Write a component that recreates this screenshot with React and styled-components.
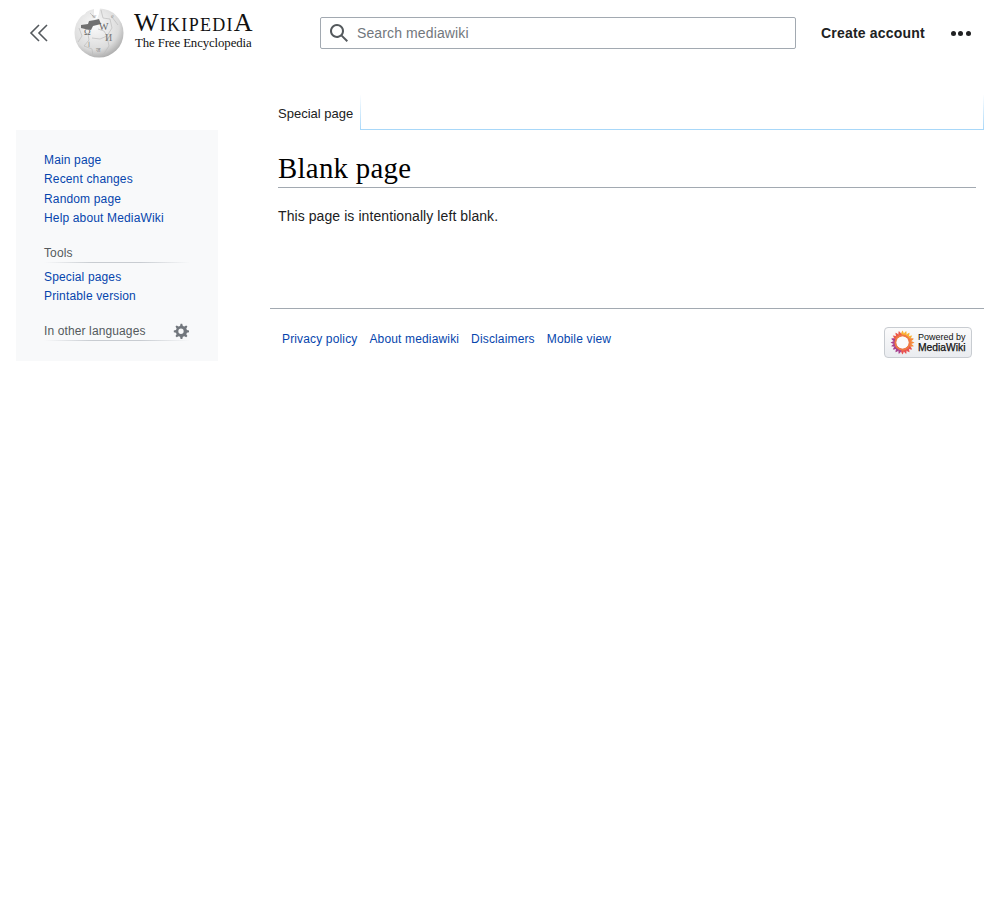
import React from "react";
import styled, { createGlobalStyle } from "styled-components";

const GlobalStyle = createGlobalStyle`
  html, body { margin: 0; padding: 0; background: #fff; }
  body {
    font-family: "Liberation Sans", Arial, sans-serif;
    color: #202122;
  }
`;

const Page = styled.div`
  width: 1000px;
  min-height: 900px;
  box-sizing: border-box;
`;

const Header = styled.header`
  height: 66px;
  display: flex;
  align-items: center;
  padding-left: 28px;
`;

const Collapse = styled.button`
  width: 22px;
  height: 22px;
  padding: 0;
  border: 0;
  background: none;
  display: flex;
  align-items: center;
  justify-content: center;
  margin-right: 24px;
`;

const Logo = styled.a`
  width: 246px;
  display: flex;
  align-items: center;
  gap: 10px;
  color: #000;
  text-decoration: none;
`;

const Wordmark = styled.div`
  display: flex;
  flex-direction: column;
  margin-top: -6px;
  font-family: "Liberation Serif", "Times New Roman", serif;
  color: #111;
`;

const WordmarkTitle = styled.span`
  font-size: 26px;
  line-height: 25px;
  font-variant: small-caps;
  letter-spacing: 1.28px;
  white-space: nowrap;
`;

const WordmarkSub = styled.span`
  font-size: 12.8px;
  line-height: 14px;
  margin-top: 1px;
  padding-left: 1px;
  letter-spacing: -0.1px;
  white-space: nowrap;
`;

const SearchBox = styled.div`
  width: 476px;
  height: 32px;
  box-sizing: border-box;
  border: 1px solid #a2a9b1;
  border-radius: 2px;
  display: flex;
  align-items: center;
  gap: 8px;
  padding-left: 8px;
  font-size: 14px;
  letter-spacing: 0.12px;
  color: #72777d;
`;

const CreateAccount = styled.a`
  margin-left: 25px;
  font-size: 14px;
  font-weight: 700;
  letter-spacing: 0.2px;
  color: #202122;
  white-space: nowrap;
`;

const More = styled.div`
  margin-left: 26px;
  display: flex;
  gap: 2.500px;
`;

const Dot = styled.span`
  width: 5px;
  height: 5px;
  border-radius: 50%;
  background: #202122;
`;

const Body = styled.div`
  display: grid;
  grid-template-columns: 202px 714px;
  column-gap: 52px;
  padding: 29px 16px 0;
  align-items: start;
`;

const Sidebar = styled.nav`
  margin-top: 35px;
  background: #f8f9fa;
  padding: 21px 28px 20px;
  height: 231px;
  box-sizing: border-box;
`;

const LinkList = styled.ul`
  list-style: none;
  margin: 0;
  padding: 0;
`;

const SideLink = styled.li`
  font-size: 12px;
  line-height: 19.3px;
  letter-spacing: 0.15px;
  color: #0645ad;
  white-space: nowrap;
`;

const SectionHead = styled.div`
  height: 18px;
  margin: ${({ $top }) => $top}px 0 5px;
  width: 146px;
  display: flex;
  justify-content: space-between;
  align-items: flex-start;
  font-size: 12px;
  line-height: 16px;
  letter-spacing: 0.12px;
  color: #54595d;
  background: linear-gradient(to right, rgba(200,204,209,0) 0, #c8ccd1 33%, #c8ccd1 66%, rgba(200,204,209,0) 100%) bottom / 100% 1px no-repeat;
`;

const Gear = styled.svg`
  width: 16px;
  height: 16px;
  margin-right: 1px;
`;

const Main = styled.main``;

const Tabs = styled.div`
  height: 36px;
  display: flex;
  box-sizing: border-box;
  padding-left: 8px;
`;

const Tab = styled.div`
  width: 82px;
  box-sizing: border-box;
  padding-top: 11px;
  font-size: 13px;
  line-height: 16px;
  color: #202122;
  white-space: nowrap;
`;

const TabFill = styled.div`
  flex: 1;
  height: 35px;
  box-sizing: border-box;
  border-left: 1px solid;
  border-right: 1px solid;
  border-bottom: 1px solid;
  border-image: linear-gradient(to bottom, #fff 0, #a7d7f9 100%) 1;
`;

const Article = styled.div`
  padding: 0 8px;
`;

const Heading = styled.h1`
  margin: 19px 0 0;
  font-family: "Liberation Serif", "Times New Roman", serif;
  font-size: 28.8px;
  font-weight: 400;
  line-height: 37px;
  letter-spacing: 0.3px;
  color: #000;
  border-bottom: 1px solid #a2a9b1;
`;

const Text = styled.p`
  margin: 20px 0 0;
  font-size: 14px;
  line-height: 16px;
  letter-spacing: 0.08px;
  color: #202122;
`;

const Footer = styled.footer`
  margin-top: 84px;
  border-top: 1px solid #a2a9b1;
  padding: 18px 12px 0;
  display: flex;
  justify-content: space-between;
  align-items: flex-start;
`;

const FooterLinks = styled.div`
  display: flex;
  gap: 12px;
  padding-top: 5px;
  font-size: 12px;
  line-height: 14px;
  letter-spacing: 0.15px;
  color: #0645ad;
`;

const Badge = styled.div`
  width: 88px;
  height: 31px;
  box-sizing: border-box;
  border: 1px solid #c8ccd1;
  border-radius: 4px;
  background: linear-gradient(#fbfbfb, #eaecf0);
  display: flex;
  align-items: center;
  gap: 3px;
  padding-left: 5px;
`;

const BadgeText = styled.div`
  display: flex;
  flex-direction: column;
  color: #111;
  font-size: 9px;
  line-height: 10px;
  white-space: nowrap;
`;

const BadgeStrong = styled.span`
  font-size: 10.3px;
  line-height: 11px;
  -webkit-text-stroke: 0.25px #111;
`;

const GlobeLetter = styled.text`
  font-family: "Liberation Serif", serif;
  font-size: ${({ $size }) => $size}px;
  fill: ${({ $fill }) => $fill};
`;

const petals = Array.from({ length: 20 }, (_, i) => i * 18);
const petalColor = (a) => {
  if (a < 60) return "#f9b233";
  if (a < 120) return "#f58a3c";
  if (a < 190) return "#e8504f";
  if (a < 290) return "#a8408f";
  return "#ec5a4b";
};

const Globe = () => (
  <svg width="50" height="50" viewBox="0 0 50 50">
    <defs>
      <radialGradient id="g" cx="0.42" cy="0.35" r="0.75">
        <stop offset="0" stopColor="#fbfbfb" />
        <stop offset="0.65" stopColor="#dcdcdc" />
        <stop offset="1" stopColor="#989898" />
      </radialGradient>
    </defs>
    <circle cx="25" cy="25" r="24.500" fill="url(#g)" />
    <path d="M20 0h6l-1 6-2 5-3-1zM6 3 14 1l-3 5-6 3z" fill="#fff" />
    <path d="M7 17l7-1 1-3 6-1 4-1 2 5-8 2-2 4-6-1-4-1z" fill="#707070" />
    <path d="M16 5l5 5M27 2l2 8 7 1 2 9-5 8 2 10-6 9M14 26l1 6-5 6 8 3 1 7M24 21l6 2 3 5-7 3-8-1M38 9l6 8M5 20l3 8-4 6" fill="none" stroke="#bbb" strokeWidth="0.700" />
    <GlobeLetter x="10" y="27" $size={9} $fill="#666">Ω</GlobeLetter>
    <GlobeLetter x="25" y="22" $size={10} $fill="#666">W</GlobeLetter>
    <GlobeLetter x="31" y="33" $size={10} $fill="#777">И</GlobeLetter>
    <GlobeLetter x="14" y="39" $size={7} $fill="#888">ا</GlobeLetter>
    <GlobeLetter x="18" y="10" $size={6} $fill="#999">w</GlobeLetter>
    <GlobeLetter x="37" y="10" $size={6} $fill="#999">e</GlobeLetter>
    <GlobeLetter x="22" y="44" $size={6} $fill="#888">ज</GlobeLetter>
  </svg>
);

const App = () => {
  return (
    <Page>
      <GlobalStyle />
      <Header>
        <Collapse aria-label="Hide sidebar">
          <svg width="20" height="20" viewBox="0 0 20 20" fill="none" stroke="#54595d" strokeWidth="1.600">
            <path d="M10 2 2 10l8 8M18 2l-8 8 8 8" />
          </svg>
        </Collapse>
        <Logo>
          <Globe />
          <Wordmark>
            <WordmarkTitle>WikipediA</WordmarkTitle>
            <WordmarkSub>The Free Encyclopedia</WordmarkSub>
          </Wordmark>
        </Logo>
        <SearchBox>
          <svg width="20" height="20" viewBox="0 0 20 20" fill="#54595d">
            <path d="M12.200 13.600a7 7 0 1 1 1.400-1.400l5.400 5.400-1.400 1.400zM3 8a5 5 0 1 0 10 0A5 5 0 0 0 3 8z" />
          </svg>
          Search mediawiki
        </SearchBox>
        <CreateAccount>Create account</CreateAccount>
        <More>
          <Dot />
          <Dot />
          <Dot />
        </More>
      </Header>
      <Body>
        <Sidebar>
          <LinkList>
            <SideLink>Main page</SideLink>
            <SideLink>Recent changes</SideLink>
            <SideLink>Random page</SideLink>
            <SideLink>Help about MediaWiki</SideLink>
          </LinkList>
          <SectionHead $top={17}>Tools</SectionHead>
          <LinkList>
            <SideLink>Special pages</SideLink>
            <SideLink>Printable version</SideLink>
          </LinkList>
          <SectionHead $top={16}>
            In other languages
            <Gear viewBox="0 0 20 20" fill="#72777d">
              <path fillRule="evenodd" d="M10.500 1h-1l-.7 2.600-1.900.8-2.300-1.400-1.500 1.500 1.400 2.300-.8 1.900L1 9.400v2.100l2.700.7.8 1.900-1.400 2.300 1.500 1.500 2.300-1.400 1.900.8.700 2.700h2.100l.7-2.700 1.900-.8 2.300 1.400 1.500-1.500-1.400-2.300.8-1.900 2.600-.7V9.400l-2.600-.7-.8-1.900 1.400-2.300-1.500-1.500-2.300 1.400-1.900-.8L11.500 1h-1zM10 7a3.300 3.300 0 1 1 0 6.600A3.300 3.300 0 0 1 10 7z" />
            </Gear>
          </SectionHead>
        </Sidebar>
        <Main>
          <Tabs>
            <Tab>Special page</Tab>
            <TabFill />
          </Tabs>
          <Article>
            <Heading>Blank page</Heading>
            <Text>This page is intentionally left blank.</Text>
          </Article>
          <Footer>
            <FooterLinks>
              <span>Privacy policy</span>
              <span>About mediawiki</span>
              <span>Disclaimers</span>
              <span>Mobile view</span>
            </FooterLinks>
            <Badge>
              <svg width="25" height="25" viewBox="0 0 24 24">
                {petals.map((a) => (
                  <path key={a} d="M12 0.500c1 1.500 1.800 3.500 1.800 5.500h-3.600c0-2 .8-4 1.800-5.500z" fill={petalColor(a)} transform={`rotate(${a} 12 12)`} />
                ))}
                <circle cx="12" cy="12" r="6.800" fill="none" stroke="#ef7a45" strokeWidth="2" />
                <circle cx="12" cy="12" r="5.800" fill="#fbfbfb" />
              </svg>
              <BadgeText>
                <span>Powered by</span>
                <BadgeStrong>MediaWiki</BadgeStrong>
              </BadgeText>
            </Badge>
          </Footer>
        </Main>
      </Body>
    </Page>
  );
};

export default App;
